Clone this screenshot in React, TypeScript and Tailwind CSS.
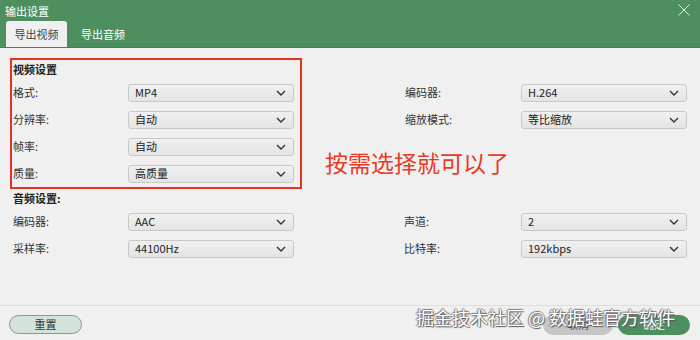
import React from 'react';

const font = { fontFamily: '"Noto Sans CJK SC", "Noto Sans", sans-serif' };

function Chevron() {
  return (
    <svg width="10" height="6" viewBox="0 0 10 6" className="shrink-0">
      <path d="M1 1 L5 5 L9 1" fill="none" stroke="#333" strokeWidth="1.4" />
    </svg>
  );
}

function Select({ value }: { value: string }) {
  return (
    <div className="w-[166px] h-[18px] flex items-center justify-between pl-[6px] pr-[7px] rounded-[3px] border border-[#c8c8c8] bg-gradient-to-b from-[#f0f0f0] to-[#e4e4e4] text-[11px] text-[#222]">
      <span>{value}</span>
      <Chevron />
    </div>
  );
}

function Row({ label, value, labelWidth }: { label: string; value: string; labelWidth: string }) {
  return (
    <div className="h-[27px] flex items-center">
      <div className={`${labelWidth} text-[11px] text-[#333]`}>{label}</div>
      <Select value={value} />
    </div>
  );
}

export default function App() {
  return (
    <div className="w-[700px] h-[340px] relative overflow-hidden bg-[#f0f0f0] flex flex-col" style={font}>
      {/* Header with tabs */}
      <div className="h-[48px] bg-[#4e8f60] flex flex-col border-b border-[#467f56]">
        <div className="h-[22px] flex items-start justify-between pl-[5px] pr-[10px] pt-[2px]">
          <span className="text-[11px] text-white leading-[18px]">输出设置</span>
          <svg width="12" height="12" viewBox="0 0 12 12" className="mt-[2px]">
            <path d="M0.5 0.5 L11.5 11.5 M11.5 0.5 L0.5 11.5" stroke="#e6f5e6" strokeWidth="1" />
          </svg>
        </div>
        <div className="flex-1 flex items-end pl-[6px]">
          <div className="w-[61px] h-[26px] bg-[#f0f0f0] rounded-t-[3px] flex items-center justify-center text-[11px] text-[#444]">
            导出视频
          </div>
          <div className="w-[72px] h-[26px] flex items-center justify-center text-[11px] text-white">
            导出音频
          </div>
        </div>
      </div>

      {/* Video settings */}
      <div className="flex mt-[10px]">
        <div className="ml-[10px] w-[292px] h-[131px] border-2 border-[#e6331f] pl-[1px]">
          <div className="h-[19px] flex items-center text-[11px] font-bold text-[#222]">视频设置</div>
          <Row label="格式:" value="MP4" labelWidth="w-[115px]" />
          <Row label="分辨率:" value="自动" labelWidth="w-[115px]" />
          <Row label="帧率:" value="自动" labelWidth="w-[115px]" />
          <Row label="质量:" value="高质量" labelWidth="w-[115px]" />
        </div>
        <div className="flex flex-col pt-[21px]">
          <div className="pl-[103px]">
            <Row label="编码器:" value="H.264" labelWidth="w-[116px]" />
            <Row label="缩放模式:" value="等比缩放" labelWidth="w-[116px]" />
          </div>
          <div className="pl-[23px] mt-[15px] text-[23px] leading-[28px] text-[#e63a26]">按需选择就可以了</div>
        </div>
      </div>

      {/* Audio settings */}
      <div className="flex flex-col">
        <div className="h-[19px] pl-[13px] flex items-center text-[11px] font-bold text-[#222]">音频设置:</div>
        <div className="flex">
          <div className="w-[302px] pl-[13px]">
            <Row label="编码器:" value="AAC" labelWidth="w-[115px]" />
            <Row label="采样率:" value="44100Hz" labelWidth="w-[115px]" />
          </div>
          <div className="pl-[102px]">
            <Row label="声道:" value="2" labelWidth="w-[117px]" />
            <Row label="比特率:" value="192kbps" labelWidth="w-[117px]" />
          </div>
        </div>
      </div>

      {/* Footer */}
      <div className="mt-auto border-t border-[#dedede] h-[35px] flex items-center justify-between pl-[9px] pr-[10px] pt-[3px]">
        <button className="w-[73px] h-[19px] rounded-full border border-[#8a9a8e] bg-[#d3e3d8] text-[11px] text-[#333]">重置</button>
        <div className="flex gap-[5px]">
          <button className="w-[70px] h-[20px] rounded-full bg-[#c6c6c6] text-[11px] text-[#555]">取消</button>
          <button className="w-[72px] h-[20px] rounded-full bg-[#4e8f60] text-[11px] text-white">确定</button>
        </div>
      </div>

      {/* Watermark */}
      <div className="absolute left-[416px] top-[305px] text-[18px] leading-[24px] text-white [text-shadow:1px_1px_1px_#555,-1px_0_1px_#777,0_-1px_1px_#777] whitespace-nowrap">
        掘金技术社区 @ 数据蛙官方软件
      </div>
    </div>
  );
}
